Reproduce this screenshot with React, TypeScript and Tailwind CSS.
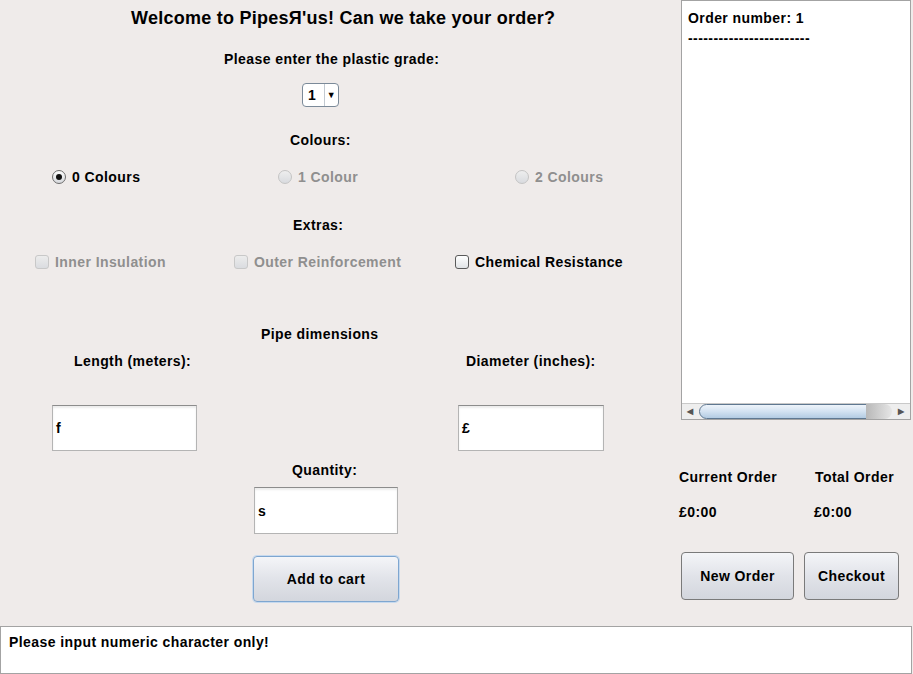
import React from "react";

const enabled = "text-black";
const disabled = "text-[#8f8f8f]";

function Radio({ label, checked, off }: { label: string; checked?: boolean; off?: boolean }) {
  return (
    <div className="flex items-center gap-[6px]">
      <span
        className={`flex h-[14px] w-[14px] items-center justify-center rounded-full border ${
          off ? "border-[#c4c4c4] bg-gradient-to-b from-[#eeeeee] to-[#d9dbdf]" : "border-[#6d6d6d] bg-gradient-to-b from-[#fdfdfd] to-[#d6d8dc]"
        }`}
      >
        {checked && <span className="h-[6px] w-[6px] rounded-full bg-[#111]" />}
      </span>
      <span className={off ? disabled : enabled}>{label}</span>
    </div>
  );
}

function Check({ label, off }: { label: string; off?: boolean }) {
  return (
    <div className="flex items-center gap-[6px]">
      <span
        className={`h-[14px] w-[14px] rounded-[3px] border ${
          off ? "border-[#c8c8c8] bg-gradient-to-b from-[#ececec] to-[#dadce0]" : "border-[#5a5a5a] bg-gradient-to-b from-white to-[#e1e3e6]"
        }`}
      />
      <span className={off ? disabled : enabled}>{label}</span>
    </div>
  );
}

function Field({ value, className }: { value: string; className: string }) {
  return (
    <div
      className={`flex items-center border border-[#b4b4b4] border-t-[#8c8c8c] bg-white pl-[3px] shadow-[inset_0_2px_2px_rgba(0,0,0,0.08)] ${className}`}
    >
      {value}
    </div>
  );
}

function Btn({ label, className }: { label: string; className: string }) {
  return (
    <div
      className={`flex items-center justify-center rounded-[4px] border bg-gradient-to-b from-[#f4f5f8] via-[#e1e3e9] to-[#d3d6dd] ${className}`}
    >
      {label}
    </div>
  );
}

export default function App() {
  return (
    <div className="h-[674px] w-[913px] overflow-hidden bg-[#efebea] font-['Liberation_Sans',Arial,sans-serif] text-[14px] leading-[20px] font-bold tracking-[0.42px] text-black">
      <div className="flex h-[626px]">
        {/* order form */}
        <div className="flex w-[679px] flex-col">
          <div className="mt-[8px] pl-[131px] text-[18px] tracking-[0.25px]">Welcome to PipesЯ'us! Can we take your order?</div>
          <div className="mt-[21px] pl-[224px]">Please enter the plastic grade:</div>
          <div className="ml-[302px] mt-[14px] flex h-[24px] w-[37px] items-center rounded-[4px] border border-[#7b8a99] bg-white">
            <span className="w-[21px] pl-[5px]">1</span>
            <span className="flex h-full flex-1 items-center justify-center border-l border-[#c2c9d1] text-[9px]">▼</span>
          </div>
          <div className="mt-[23px] pl-[290px]">Colours:</div>
          <div className="mt-[17px] flex pl-[52px]">
            <div className="w-[226px]">
              <Radio label="0 Colours" checked />
            </div>
            <div className="w-[237px]">
              <Radio label="1 Colour" off />
            </div>
            <Radio label="2 Colours" off />
          </div>
          <div className="mt-[28px] pl-[293px]">Extras:</div>
          <div className="mt-[17px] flex pl-[35px]">
            <div className="w-[199px]">
              <Check label="Inner Insulation" off />
            </div>
            <div className="w-[221px]">
              <Check label="Outer Reinforcement" off />
            </div>
            <Check label="Chemical Resistance" />
          </div>
          <div className="mt-[52px] pl-[261px]">Pipe dimensions</div>
          <div className="mt-[7px] flex pl-[74px]">
            <div className="w-[392px]">Length (meters):</div>
            <div>Diameter (inches):</div>
          </div>
          <div className="mt-[34px] flex pl-[52px]">
            <Field value="f" className="h-[46px] w-[145px]" />
            <Field value="£" className="ml-[261px] h-[46px] w-[146px]" />
          </div>
          <div className="mt-[9px] pl-[292px]">Quantity:</div>
          <Field value="s" className="ml-[254px] mt-[7px] h-[47px] w-[144px]" />
          <Btn label="Add to cart" className="ml-[253px] mt-[22px] h-[46px] w-[146px] border-[#7ea6d0] shadow-[0_0_0_1px_#c6d9ee]" />
        </div>

        {/* order summary */}
        <div className="flex w-[234px] flex-col">
          <div className="ml-[2px] flex h-[420px] w-[230px] flex-col border border-[#a3a3a3] bg-white">
            <div className="pl-[6px] pt-[7px]">
              <div>Order number: 1</div>
              <div>------------------------</div>
            </div>
            <div className="mt-auto flex h-[16px] items-center border-t border-[#c9c9c9] bg-[#eeeeee]">
              <span className="flex w-[17px] justify-center text-[8px] leading-none text-[#555]">◀</span>
              <span className="h-[15px] w-[175px] rounded-full border border-[#5f7891] bg-gradient-to-b from-[#eef4fb] via-[#d3e2f1] to-[#b3cbe2]" />
              <span className="-ml-[8px] h-[15px] w-[26px] rounded-r-full bg-gradient-to-r from-[#b8b8b8] to-[#e6e6e6]" />
              <span className="flex-1" />
              <span className="flex w-[17px] justify-center text-[8px] leading-none text-[#555]">▶</span>
            </div>
          </div>
          <div className="mt-[47px] flex">
            <div className="w-[136px]">Current Order</div>
            <div>Total Order</div>
          </div>
          <div className="mt-[15px] flex">
            <div className="w-[135px]">£0:00</div>
            <div>£0:00</div>
          </div>
          <div className="ml-[2px] mt-[30px] flex gap-[10px]">
            <Btn label="New Order" className="h-[48px] w-[113px] border-[#7a7a7a]" />
            <Btn label="Checkout" className="h-[48px] w-[95px] border-[#7a7a7a]" />
          </div>
        </div>
      </div>

      {/* message area */}
      <div className="h-[48px] w-[912px] border border-[#a3a3a3] bg-white pl-[8px] pt-[5px]">
        Please input numeric character only!
      </div>
    </div>
  );
}
